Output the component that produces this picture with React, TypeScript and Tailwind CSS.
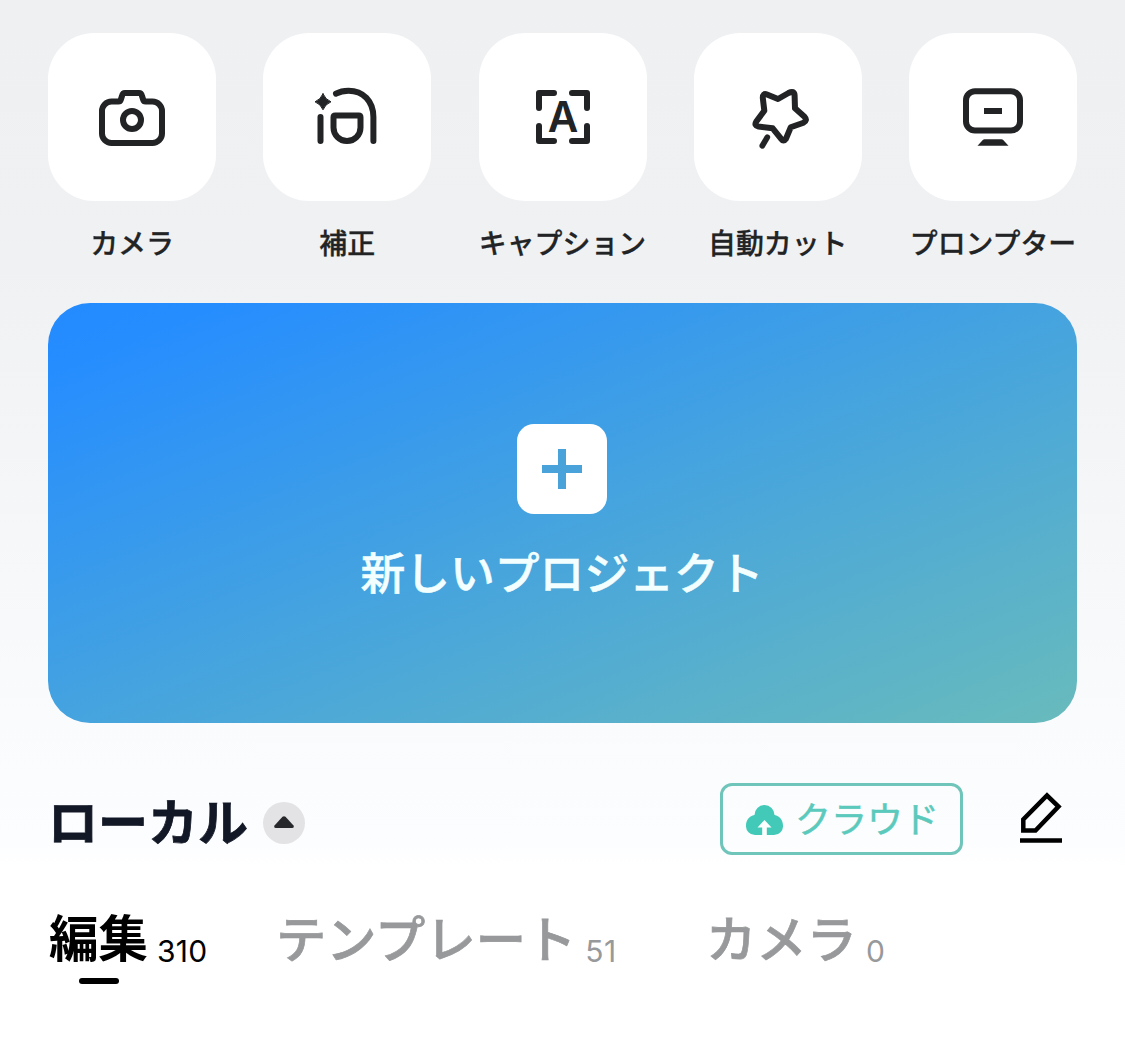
import type { ReactNode } from 'react';

const stroke = {
  fill: 'none',
  stroke: '#212325',
  strokeWidth: 6,
  strokeLinecap: 'round' as const,
  strokeLinejoin: 'round' as const,
};

const tools: { label: string; icon: ReactNode }[] = [
  {
    label: 'カメラ',
    icon: (
      <g {...stroke}>
        <path d="M54 78a9.500 9.500 0 0 1 9.500-9.500h7q1.700 0 2.200-1.500l1.300-4q.7-3 3-3h14q2.300 0 3 3l1.300 4q.5 1.500 2.200 1.500h7a9.500 9.500 0 0 1 9.500 9.500v22.500a9.500 9.500 0 0 1-9.500 9.500h-41a9.500 9.500 0 0 1-9.500-9.500z" />
        <circle cx="84" cy="87" r="9" />
      </g>
    ),
  },
  {
    label: '補正',
    icon: (
      <g {...stroke}>
        <path d="M57.500 84v24M73 60.700C77 58.400 81 57.700 85.500 57.700C100 57.700 110.400 68 110.400 84V108" />
        <path d="M72.200 82.500h23.600q1.700 0 1.700 1.700v10.300a13.500 13.500 0 0 1-27 0v-10.300q0-1.700 1.700-1.700z" />
        <path d="M60 60.800q2.200 5.700 8 8q-5.800 2.300-8 8q-2.200-5.700-8-8q5.800-2.300 8-8z" fill="#212325" strokeWidth="1" />
      </g>
    ),
  },
  {
    label: 'キャプション',
    icon: (
      <>
        <path {...stroke} d="M60 75v-15h15M93 60h15v15M108 93v15h-15M75 108h-15v-15" />
        <text x="84" y="99" textAnchor="middle" fontFamily="Inter" fontWeight="600" fontSize="42" fill="#212325">A</text>
      </>
    ),
  },
  {
    label: '自動カット',
    icon: (
      <g {...stroke}>
        <path d="M73 61.500L84 66L94.500 60Q100.300 57 100.600 62.500L101 75.300L110.500 83.700Q113.800 87.300 109.500 89.700L96.700 94.300L92 105.700Q89.500 109.300 87 105.700L78.700 95.300L64.500 93.500Q59.800 92.500 62.300 88.500L70.300 77.700L68.800 65Q68.800 59.700 73 61.500z" />
        <path d="M73.300 104.300L68.300 112.700" strokeWidth="5.700" />
      </g>
    ),
  },
  {
    label: 'プロンプター',
    icon: (
      <>
        <rect {...stroke} x="57" y="58.300" width="54" height="39.300" rx="9" />
        <path fill="#212325" d="M75 75h18v6h-18zM75.500 106.300h17q1 0 1.700.7l5.300 5.700h-31l5.300-5.700q.7-.7 1.700-.7z" />
      </>
    ),
  },
];

function Tool({ label, icon }: { label: string; icon: ReactNode }) {
  return (
    <button className="flex w-[168px] flex-col items-center">
      <span className="block size-[168px] rounded-[46px] bg-white">
        <svg viewBox="0 0 168 168" className="size-full">{icon}</svg>
      </span>
      <span className="mt-[21px] mb-px text-[27.900px] leading-10 font-medium whitespace-nowrap text-[#212325] [-webkit-text-stroke:0.3px_currentColor]">{label}</span>
    </button>
  );
}

function Tab({ label, count, active = false }: { label: string; count: number; active?: boolean }) {
  return (
    <button className={active ? 'relative flex items-end text-black' : 'relative flex items-end text-[#97999b]'}>
      <span className={active ? 'ml-px text-[49.500px] leading-[60px] font-bold' : 'text-[50.300px] leading-[60px] font-medium [-webkit-text-stroke:0.7px_currentColor]'}>{label}</span>
      <span className={active ? 'mb-[-9px] ml-[9px] font-[Inter] text-[30px] leading-[48px] tracking-[0.3px]' : 'mb-[-9px] ml-[9px] font-[Inter] text-[30px] leading-[48px] tracking-[0.5px]'}>{count}</span>
      {active && <span className="absolute top-[72px] left-[31px] h-1.5 w-10 rounded-full bg-black" />}
    </button>
  );
}

export default function App() {
  return (
    <main className="h-[1043px] w-[1125px] overflow-hidden bg-[linear-gradient(180deg,#eff0f2_0px,#f0f1f3_260px,#fafbfd_720px,#fcfdff_840px,#ffffff_870px)] px-12 pt-[33px] font-['Noto_Sans_CJK_JP',sans-serif]">
      <nav className="flex justify-between">
        {tools.map((tool) => (
          <Tool key={tool.label} {...tool} />
        ))}
      </nav>

      <button className="mt-10 flex h-[420px] w-full flex-col items-center rounded-[42px] bg-[linear-gradient(to_bottom_right,#248bff_0%,#268dff_8%,#45a3df_50%,#68bbbc_100%)] pt-[121px] pr-px">
        <span className="flex size-[90px] items-center justify-center rounded-[17px] bg-white">
          <svg viewBox="0 0 40 40" className="size-10" stroke="#4aa2da" strokeWidth="8">
            <path d="M20 0v40M0 20h40" />
          </svg>
        </span>
        <span className="mt-[27px] text-[44.800px] leading-[60px] font-medium text-[#f3ffff] [-webkit-text-stroke:0.5px_currentColor]">新しいプロジェクト</span>
      </button>

      <header className="mt-[60px] flex h-[72px] items-center">
        <h1 className="text-[50px] leading-[72px] font-bold text-[#121826] [-webkit-text-stroke:0.8px_currentColor]">ローカル</h1>
        <button aria-label="並べ替え" className="mt-2 ml-[15px] flex size-[42px] items-center justify-center rounded-full bg-[#e3e3e5]">
          <svg viewBox="0 0 42 42" className="size-full" fill="#27282b">
            <path d="M19.500 14.800q1.500-1.300 3 0l8 8.800q1 2.400-1.300 2.400h-16.400q-2.300 0-1.300-2.400z" />
          </svg>
        </button>
        <button className="ml-auto flex h-[72px] w-[243px] items-center rounded-xl border-3 border-[#6fc5ba] pl-[23px] text-[#5bcabc]">
          <svg viewBox="0 0 37 31" className="h-[31px] w-[37px]">
            <path fill="#43c9b8" d="M9 31a9 9 0 0 1-9-9.500c0-5.500 3.500-9.500 8.500-10.500a10 10 0 0 1 20 0c5 1 8.500 5 8.500 10.500a9 9 0 0 1-9 9.500z" />
            <path fill="#fdffff" d="M18.500 16l7 7.500h-4.700V31h-4.600v-7.500h-4.700z" />
          </svg>
          <span className="mb-[3px] ml-3 text-[36px] leading-[63px] font-normal [-webkit-text-stroke:0.5px_currentColor]">クラウド</span>
        </button>
        <button aria-label="編集" className="mr-[15px] mb-1 ml-[57px]">
          <svg viewBox="0 0 42 51" className="h-[51px] w-[42px]" fill="none" stroke="#000">
            <path strokeWidth="4.500" d="M3.300 38.500V27.500L27 3.500l11.500 11L15.500 38.500z" />
            <path strokeWidth="4.500" d="M0 48.500h42" />
          </svg>
        </button>
      </header>

      <div className="mt-[51px] flex">
        <div className="w-[228px]"><Tab label="編集" count={310} active /></div>
        <div className="w-[430px]"><Tab label="テンプレート" count={51} /></div>
        <Tab label="カメラ" count={0} />
      </div>
    </main>
  );
}
